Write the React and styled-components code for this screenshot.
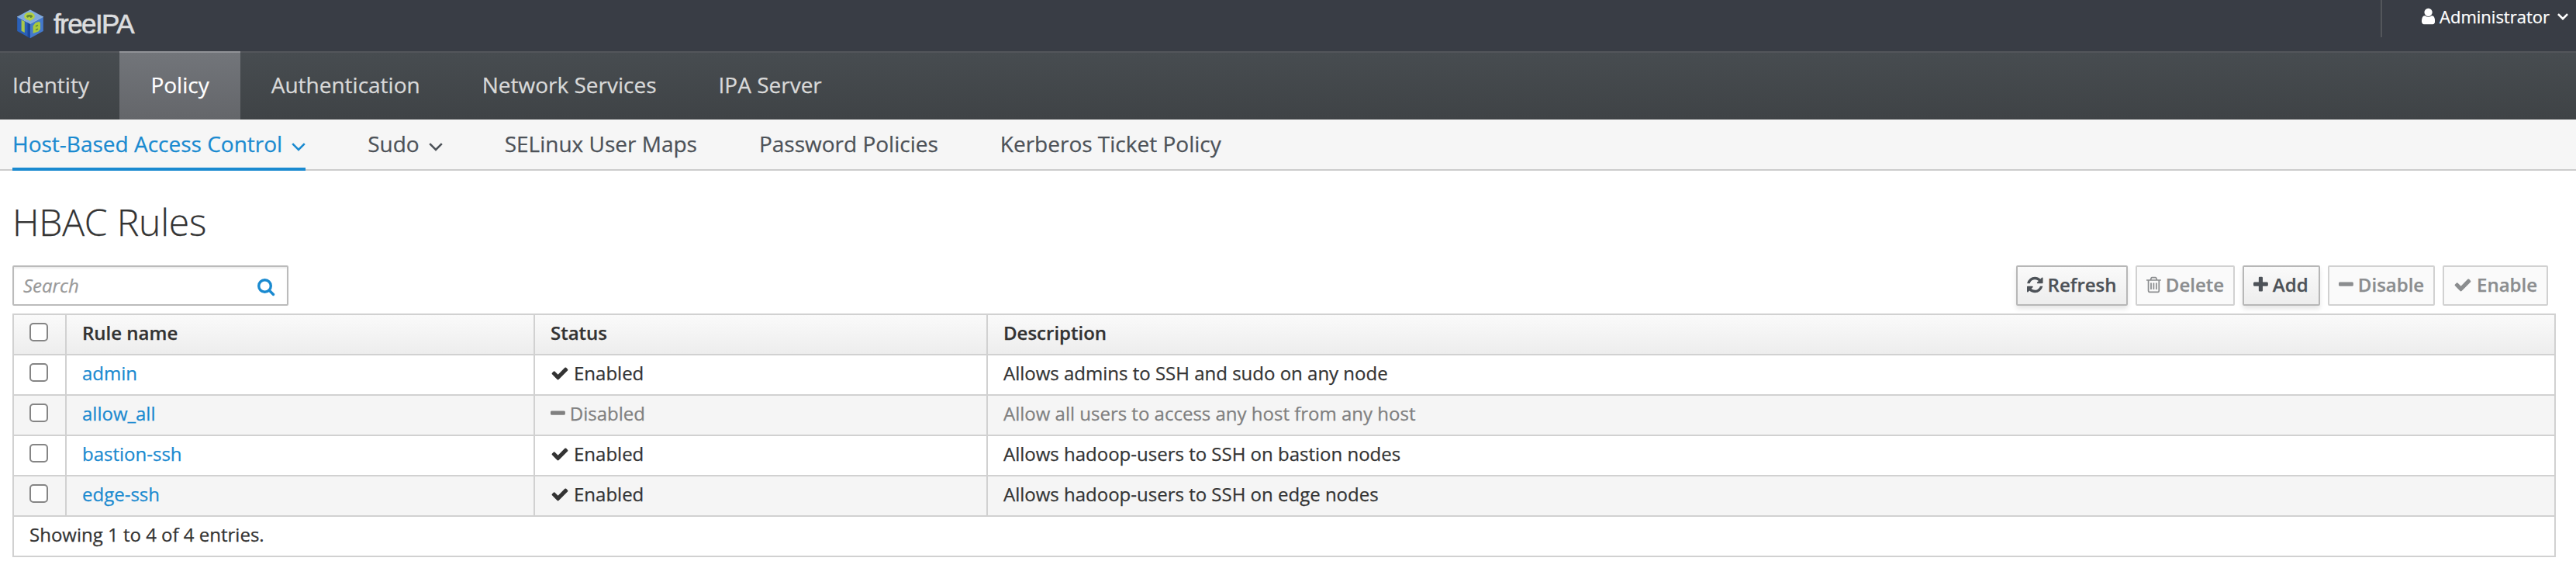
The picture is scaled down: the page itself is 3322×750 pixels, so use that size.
import React from "react";
import styled, { createGlobalStyle, css } from "styled-components";

const Global = createGlobalStyle`
  * { box-sizing: border-box; }
  body {
    margin: 0;
    background: #fff;
    color: #333;
    font: 24px/40px "Open Sans", "Noto Sans", sans-serif;
    -webkit-text-stroke: 0.25px currentColor;
  }
`;

const paths = {
  user: "M1536 1399q0 109-62.5 187t-150.5 78h-854q-88 0-150.5-78t-62.5-187q0-85 8.5-160.5t31.5-152 58.5-131 94-89 134.5-34.5q131 128 313 128t313-128q76 0 134.5 34.5t94 89 58.5 131 31.5 152 8.5 160.5zm-256-887q0 159-112.5 271.5t-271.5 112.5-271.5-112.5-112.5-271.5 112.5-271.5 271.5-112.5 271.5 112.5 112.5 271.5z",
  check: "M1671 566q0 40-28 68l-724 724-136 136q-28 28-68 28t-68-28l-136-136-362-362q-28-28-28-68t28-68l136-136q28-28 68-28t68 28l294 295 656-657q28-28 68-28t68 28l136 136q28 28 28 68z",
  minus: "M1600 736v192q0 40-28 68t-68 28h-1216q-40 0-68-28t-28-68v-192q0-40 28-68t68-28h1216q40 0 68 28t28 68z",
  plus: "M1600 736v192q0 40-28 68t-68 28h-416v416q0 40-28 68t-68 28h-192q-40 0-68-28t-28-68v-416h-416q-40 0-68-28t-28-68v-192q0-40 28-68t68-28h416v-416q0-40 28-68t68-28h192q40 0 68 28t28 68v416h416q40 0 68 28t28 68z",
  trash: "M704 736v576q0 14-9 23t-23 9h-64q-14 0-23-9t-9-23v-576q0-14 9-23t23-9h64q14 0 23 9t9 23zm256 0v576q0 14-9 23t-23 9h-64q-14 0-23-9t-9-23v-576q0-14 9-23t23-9h64q14 0 23 9t9 23zm256 0v576q0 14-9 23t-23 9h-64q-14 0-23-9t-9-23v-576q0-14 9-23t23-9h64q14 0 23 9t9 23zm128 724v-948h-896v948q0 22 7 40.5t14.5 27 10.5 8.5h832q3 0 10.5-8.5t14.5-27 7-40.5zm-672-1076h448l-48-117q-7-9-17-11h-317q-10 2-17 11zm928 32v64q0 14-9 23t-23 9h-96v948q0 83-47 143.5t-113 60.5h-832q-66 0-113-58.5t-47-141.5v-952h-96q-14 0-23-9t-9-23v-64q0-14 9-23t23-9h309l70-167q15-37 54-63t79-26h320q40 0 79 26t54 63l70 167h309q14 0 23 9t9 23z",
  refresh: "M1639 1056q0 5-1 7-64 268-268 434.5t-478 166.5q-146 0-282.5-55t-243.5-157l-129 129q-19 19-45 19t-45-19-19-45v-448q0-26 19-45t45-19h448q26 0 45 19t19 45-19 45l-137 137q71 66 161 102t187 36q134 0 250-65t186-179q11-17 53-117 8-23 30-23h192q13 0 22.5 9.5t9.5 22.5zm25-800v448q0 26-19 45t-45 19h-448q-26 0-45-19t-19-45 19-45l138-138q-148-137-349-137-134 0-250 65t-186 179q-11 17-53 117-8 23-30 23h-199q-13 0-22.5-9.5t-9.5-22.5v-7q65-268 270-434.5t480-166.5q146 0 284 55.5t245 156.5l130-129q19-19 45-19t45 19 19 45z",
};

/* x offset and width of each glyph's advance box inside the 1792 grid */
const boxes = {
  user: [256, 1280],
  check: [0, 1792],
  minus: [192, 1408],
  plus: [192, 1408],
  trash: [192, 1408],
  refresh: [128, 1536],
};

const GlyphSvg = styled.svg`
  display: block;
  flex: none;
  fill: currentColor;
`;

function Glyph({ name, size = 24 }) {
  const [x, w] = boxes[name];
  return (
    <GlyphSvg width={(w / 1792) * size} height={size} viewBox={`${x} 0 ${w} 1792`}>
      <path d={paths[name]} />
    </GlyphSvg>
  );
}

const ChevronSvg = styled.svg`
  display: block;
  flex: none;
  fill: none;
  stroke: currentColor;
  stroke-width: ${(p) => p.$weight};
  margin-top: ${(p) => p.$drop}px;
`;

const Chevron = ({ width = 18, height = 11, drop = 0, weight = 2.6 }) => (
  <ChevronSvg $drop={drop} $weight={weight} width={width} height={height} viewBox="0 0 18 11">
    <path d="M1.2 1.2 L9 9 L16.8 1.2" />
  </ChevronSvg>
);

const Masthead = styled.header`
  display: flex;
  justify-content: space-between;
  align-items: flex-start;
  height: 66px;
  padding: 0 10px 0 21px;
  background: #393d45;
`;

const Brand = styled.div`
  display: flex;
  align-items: flex-start;
  gap: 12px;
  padding-top: 12px;
`;

const BrandName = styled.span`
  font: 35px/38px "Liberation Sans", Arial, sans-serif;
  letter-spacing: -1.6px;
  -webkit-text-stroke: 0.6px currentColor;
  color: #dcdddf;
`;

const CubeSvg = styled.svg`
  display: block;
`;

const Cube = () => (
  <CubeSvg width="36" height="38" viewBox="0 0 36 38">
    <path d="M18 0.5 L34.8 9.5 L18 18.5 L1.2 9.5Z" fill="#7fa9dd" />
    <path d="M1.2 9.5 L18 18.5 V37.3 L1.2 28Z" fill="#2a60b8" />
    <path d="M34.8 9.5 L18 18.5 V37.3 L34.8 28Z" fill="#4479cc" />
    <path d="M18 18.5 V37.3 L14.5 35.4 V16.6Z" fill="#1c4797" />
    <path d="M1.2 9.5 L18 18.5 L34.8 9.5" fill="none" stroke="#a5c4ea" strokeWidth="0.8" />
    <ellipse cx="17" cy="9" rx="5.4" ry="3.6" fill="#5d8438" stroke="#b2cf45" strokeWidth="3" />
    <path d="M16 10 L18.5 14.5" stroke="#b2cf45" strokeWidth="3" />
    <path d="M6.6 13.5 L10.8 15.8 V30 L6.6 27.8Z" fill="#a9c84a" />
    <path d="M21.6 21.5 L24.5 17.5 L29.4 15.8 L31 17.5 V25.5 L28.5 28.6 L21.6 31Z" fill="#a9c93c" />
    <path d="M25 22 L28 20.4 M25 26.7 L28 25.2" stroke="#5d8c3c" strokeWidth="1.6" />
  </CubeSvg>
);

const UserMenu = styled.div`
  display: flex;
  align-items: center;
  height: 48px;
  padding: 0 0 6px 51px;
  border-left: 2px solid #53565b;
  color: #fff;
  font-size: 22px;
  gap: 6px;
`;

const UserName = styled.span`
  margin-right: 4px;
`;

const PrimaryNav = styled.nav`
  display: flex;
  height: 88px;
  border-top: 2px solid #53565b;
  background: linear-gradient(#474c50, #3f4346);
`;

const PrimaryItem = styled.a`
  margin-top: -2px;
  padding: ${(p) => (p.$first ? "23px 39.5px 0 16px" : "23px 40px 0")};
  font-size: 28px;
  color: #d9d9d9;
  ${(p) =>
    p.$active &&
    css`
      color: #fff;
      border-top: 2px solid #919397;
      padding-top: 21px;
      background: linear-gradient(#72757a, #64666a);
    `}
`;

const SecondaryNav = styled.nav`
  display: flex;
  gap: 80px;
  height: 66px;
  padding-left: 16px;
  background: #f6f6f6;
  border-bottom: 2px solid #ccc;
`;

const SecondaryItem = styled.a`
  display: flex;
  align-items: flex-start;
  gap: 12px;
  height: 66px;
  padding-top: 11px;
  font-size: 28px;
  color: #4d5258;
  ${(p) =>
    p.$active &&
    css`
      color: #1a8ad0;
      border-bottom: 4px solid #1a8ad0;
    `}
`;

const Content = styled.main`
  padding: 0 26px 0 16px;
`;

const Title = styled.h1`
  margin: 0;
  padding-top: 31px;
  height: 122px;
  font-size: 48px;
  line-height: 70px;
  font-weight: 300;
  letter-spacing: -0.2px;
`;

const Toolbar = styled.div`
  display: flex;
  justify-content: space-between;
  padding-right: 10px;
  margin-bottom: 10px;
`;

const SearchBox = styled.div`
  display: flex;
  align-items: center;
  justify-content: space-between;
  width: 356px;
  height: 52px;
  padding: 0 15px 0 12px;
  border: 2px solid #bbb;
  border-radius: 2px;
  box-shadow: inset 0 2px 2px rgba(0, 0, 0, 0.075);
  color: #1a8ad0;
`;

const Placeholder = styled.span`
  font-style: italic;
  color: #999;
`;

const SearchSvg = styled.svg`
  display: block;
  margin-top: 4px;
  fill: none;
  stroke: currentColor;
`;

const Actions = styled.div`
  display: flex;
  gap: 10px;
`;

const Button = styled.button`
  display: flex;
  align-items: center;
  gap: 6px;
  width: ${(p) => p.$width}px;
  height: 52px;
  padding: 0 0 2px 12px;
  border: 2px solid #b7b7b7;
  border-radius: 2px;
  background: linear-gradient(#fafafa, #ededed);
  box-shadow: 0 4px 6px rgba(3, 3, 3, 0.1);
  color: #4d5258;
  font: 600 24px/40px "Open Sans", sans-serif;
  white-space: nowrap;
  &:disabled {
    border-color: #d1d1d1;
    background: #fafafa;
    box-shadow: none;
    color: #8b8d8f;
  }
`;

const Table = styled.div`
  border: 2px solid #d1d1d1;
`;

const Row = styled.div`
  display: grid;
  grid-template-columns: 68px 604px 584px 1fr;
  height: 52px;
  border-bottom: 2px solid #d1d1d1;
  color: ${(p) => (p.$muted ? "#808080" : "#333")};
  background: ${(p) => (p.$striped ? "#f5f5f5" : "#fff")};
  ${(p) =>
    p.$head &&
    css`
      font-weight: 600;
      background: linear-gradient(#fafafa, #ededed);
    `}
`;

const Cell = styled.div`
  display: flex;
  align-items: flex-start;
  gap: 6px;
  padding: 3px 20px 0;
  border-right: 2px solid #d1d1d1;
  &:last-child {
    border-right: 0;
  }
`;

const StatusIcon = styled.span`
  display: flex;
  align-items: center;
  height: 40px;
`;

const RuleLink = styled.a`
  color: #1a8ad0;
`;

const Checkbox = styled.input`
  appearance: none;
  width: 24px;
  height: 24px;
  margin: 7px 0 0;
  border: 2px solid #858585;
  border-radius: 5px;
  background: #fff;
`;

const Summary = styled.div`
  height: 50px;
  padding: 3px 20px 0;
`;

const primary = ["Identity", "Policy", "Authentication", "Network Services", "IPA Server"];

const secondary = [
  { label: "Host-Based Access Control", menu: true, active: true },
  { label: "Sudo", menu: true },
  { label: "SELinux User Maps" },
  { label: "Password Policies" },
  { label: "Kerberos Ticket Policy" },
];

const actions = [
  { label: "Refresh", icon: "refresh", width: 144 },
  { label: "Delete", icon: "trash", width: 128, disabled: true },
  { label: "Add", icon: "plus", width: 100 },
  { label: "Disable", icon: "minus", width: 138, disabled: true },
  { label: "Enable", icon: "check", width: 136, disabled: true },
];

const rules = [
  { name: "admin", enabled: true, text: "Allows admins to SSH and sudo on any node" },
  { name: "allow_all", enabled: false, text: "Allow all users to access any host from any host" },
  { name: "bastion-ssh", enabled: true, text: "Allows hadoop-users to SSH on bastion nodes" },
  { name: "edge-ssh", enabled: true, text: "Allows hadoop-users to SSH on edge nodes" },
];

export default function App() {
  return (
    <>
      <Global />
      <Masthead>
        <Brand>
          <Cube />
          <BrandName>freeIPA</BrandName>
        </Brand>
        <UserMenu>
          <Glyph name="user" />
          <UserName>Administrator</UserName>
          <Chevron width={14} height={9} weight={3.4} />
        </UserMenu>
      </Masthead>
      <PrimaryNav>
        {primary.map((label, i) => (
          <PrimaryItem key={label} $first={i === 0} $active={label === "Policy"}>
            {label}
          </PrimaryItem>
        ))}
      </PrimaryNav>
      <SecondaryNav>
        {secondary.map((item) => (
          <SecondaryItem key={item.label} $active={item.active}>
            {item.label}
            {item.menu && <Chevron drop={19} />}
          </SecondaryItem>
        ))}
      </SecondaryNav>
      <Content>
        <Title>HBAC Rules</Title>
        <Toolbar>
          <SearchBox>
            <Placeholder>Search</Placeholder>
            <SearchSvg width="24" height="24" viewBox="0 0 24 24">
              <circle cx="10.5" cy="10.5" r="7.8" strokeWidth="3.4" />
              <path d="M16 16 L21.5 21.5" strokeWidth="3.4" strokeLinecap="round" />
            </SearchSvg>
          </SearchBox>
          <Actions>
            {actions.map((a) => (
              <Button key={a.label} $width={a.width} disabled={a.disabled}>
                <Glyph name={a.icon} />
                {a.label}
              </Button>
            ))}
          </Actions>
        </Toolbar>
        <Table>
          <Row $head>
            <Cell><Checkbox type="checkbox" /></Cell>
            <Cell>Rule name</Cell>
            <Cell>Status</Cell>
            <Cell>Description</Cell>
          </Row>
          {rules.map((r, i) => (
            <Row key={r.name} $striped={i % 2 === 1} $muted={!r.enabled}>
              <Cell><Checkbox type="checkbox" /></Cell>
              <Cell><RuleLink>{r.name}</RuleLink></Cell>
              <Cell>
                <StatusIcon><Glyph name={r.enabled ? "check" : "minus"} /></StatusIcon>
                {r.enabled ? "Enabled" : "Disabled"}
              </Cell>
              <Cell>{r.text}</Cell>
            </Row>
          ))}
          <Summary>Showing 1 to 4 of 4 entries.</Summary>
        </Table>
      </Content>
    </>
  );
}
